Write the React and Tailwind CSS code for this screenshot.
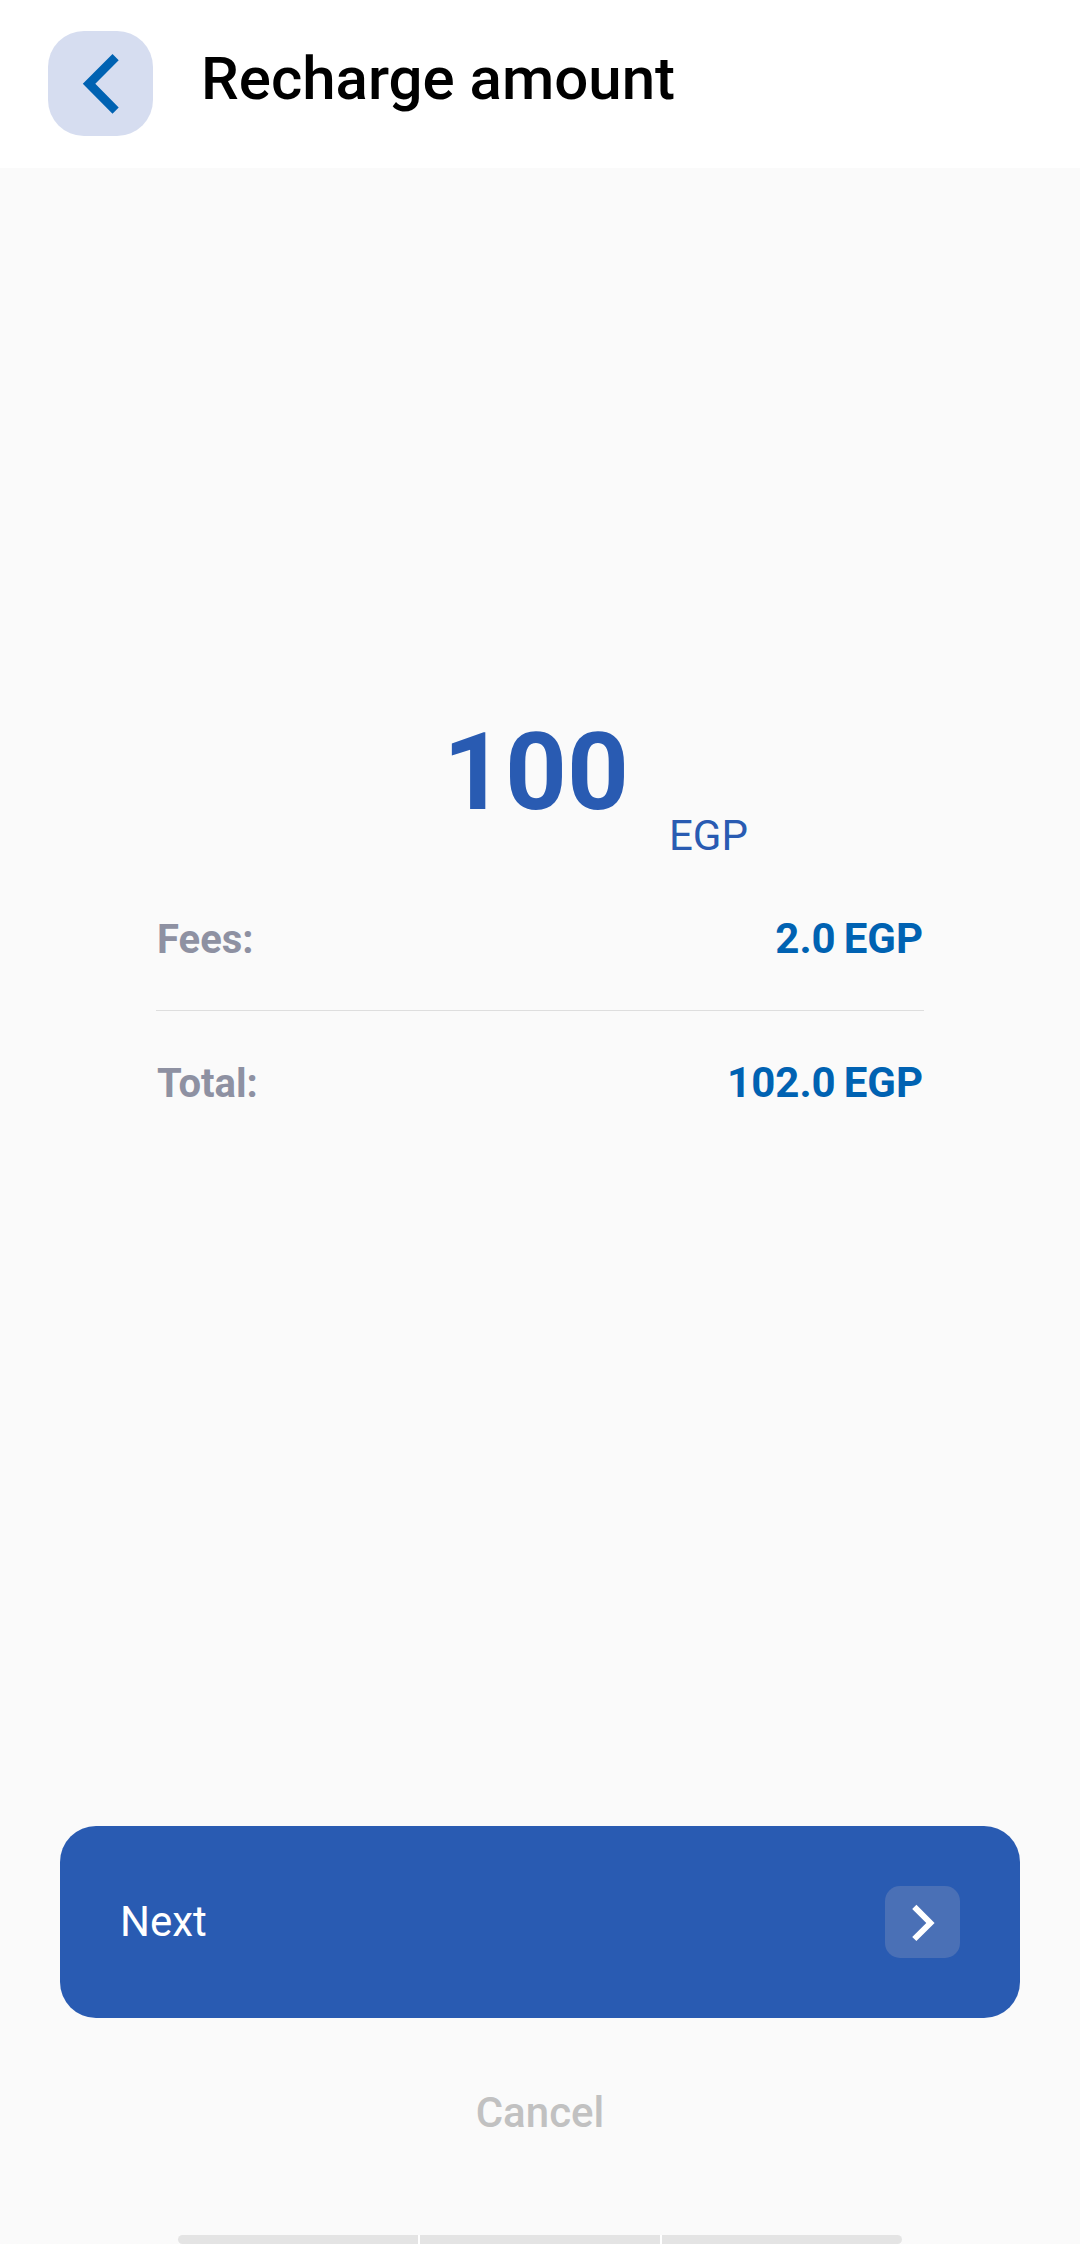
import React from "react";

const currency = "EGP";

const summary = [
  { label: "Fees:", value: "2.0" },
  { label: "Total:", value: "102.0" },
];

const Header = () => {
  return (
    <header className="flex h-[168px] items-center gap-12 bg-white px-12 pb-px">
      <button
        type="button"
        aria-label="Back"
        className="h-[105px] w-[105px] shrink-0 cursor-pointer rounded-[36px] bg-[#d6ddf0]"
      >
        <svg viewBox="0 0 105 105" className="h-full w-full" fill="#0062b2">
          <path d="M64.5 23 70.7 29.2 47.3 52.8 70.7 76.4 64.5 82.7 34.8 52.8Z" />
        </svg>
      </button>
      <h1 className="pb-[10px] text-[60px] leading-[72px] font-medium text-black">
        Recharge amount
      </h1>
    </header>
  );
};

const Amount = () => {
  return (
    <div className="grid grid-cols-[1fr_auto_1fr] gap-8 text-[#295bb2]">
      <p className="col-start-2 pr-2 pb-6 text-[108px] leading-[128px] font-bold">
        100
      </p>
      <p className="self-end text-[42px] leading-[48px]">{currency}</p>
    </div>
  );
};

const Summary = () => {
  return (
    <dl className="mt-[7px] divide-y divide-[#dedede] px-[156px] font-bold">
      {summary.map((item) => (
        <div
          key={item.label}
          className="flex items-baseline justify-between px-px pt-12 pb-[46px] leading-[48px]"
        >
          <dt className="text-[40px] text-[#8e91a2]">{item.label}</dt>
          <dd className="flex gap-2 text-[42px] text-[#0062b2]">
            <span>{item.value}</span>
            <span>{currency}</span>
          </dd>
        </div>
      ))}
    </dl>
  );
};

const App = () => {
  return (
    <div className="flex min-h-screen flex-col bg-[#fafafa] font-[Roboto,sans-serif]">
      <Header />

      <main className="flex flex-1 flex-col pt-[540px]">
        <Amount />
        <Summary />

        {/* Actions */}
        <div className="mt-auto flex flex-col items-center px-[60px] pb-[98px]">
          <button
            type="button"
            className="flex h-48 w-full cursor-pointer items-center justify-between rounded-[36px] bg-[#295bb2] px-[60px] text-[42px] leading-[48px] text-white"
          >
            Next
            <span className="h-[72px] w-[75px] rounded-[15px] bg-[#4a70b6]">
              <svg viewBox="0 0 75 72" className="h-full w-full" fill="#fff">
                <path d="M31.4 18.8 27.2 23 41.3 37 27.2 50.9 31.4 55.1 49.6 37Z" />
              </svg>
            </span>
          </button>
          <button
            type="button"
            className="mt-[71px] cursor-pointer text-[42px] leading-[48px] font-medium text-[#c1c1c1]"
          >
            Cancel
          </button>
        </div>
      </main>

      {/* Bottom gesture bar */}
      <div className="px-[178px]">
        <div className="flex h-[9px] divide-x-2 divide-white overflow-hidden rounded-full bg-[#e4e4e4]">
          <span className="flex-1" />
          <span className="flex-1" />
          <span className="flex-1" />
        </div>
      </div>
    </div>
  );
};

export default App;
